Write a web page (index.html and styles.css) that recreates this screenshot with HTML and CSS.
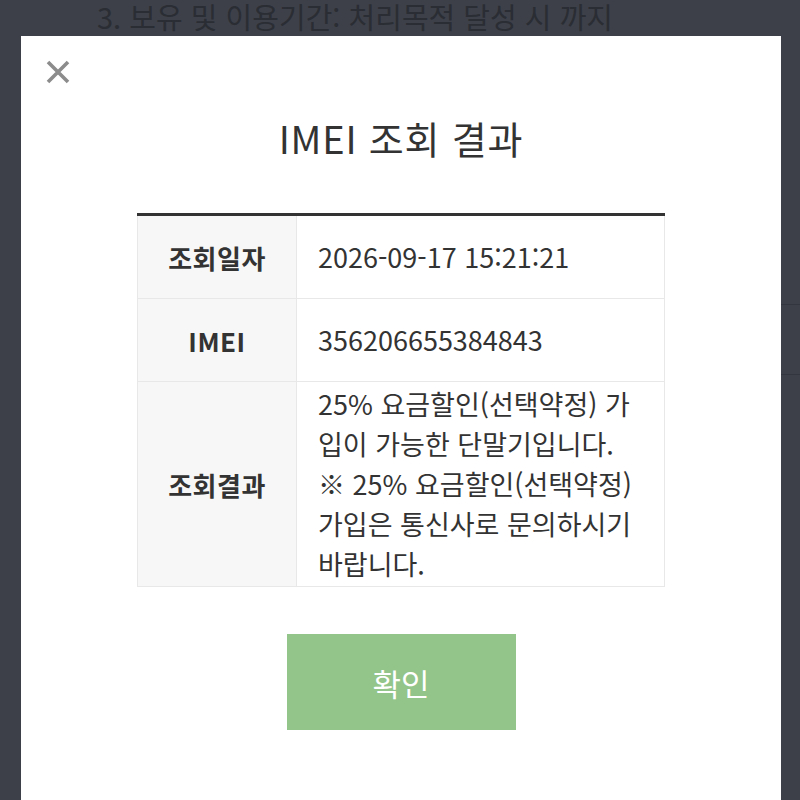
FILE: index.html
```html
<!DOCTYPE html>
<html lang="ko">
<head>
<meta charset="UTF-8">
<meta name="viewport" content="width=device-width, initial-scale=1.0">
<title>IMEI 조회 결과</title>
<link rel="stylesheet" href="styles.css">
</head>
<body>
<div class="page">
<p class="page-text">3. 보유 및 이용기간: 처리목적 달성 시 까지</p>
<div class="page-list">
<div class="page-row"></div>
<div class="page-row"></div>
</div>
</div>

<div class="modal">
<button class="close-btn" type="button" aria-label="닫기">
<svg width="24" height="24" viewBox="0 0 24 24">
<path d="M2 2 L22 22 M22 2 L2 22" stroke="#8c8c8c" stroke-width="3.6" fill="none"/>
</svg>
</button>
<h2 class="modal-title">IMEI 조회 결과</h2>

<div class="result-table">
<div class="result-row">
<div class="result-label">조회일자</div>
<div class="result-value">2026-09-17 15:21:21</div>
</div>
<div class="result-row">
<div class="result-label">IMEI</div>
<div class="result-value">356206655384843</div>
</div>
<div class="result-row tall">
<div class="result-label">조회결과</div>
<div class="result-value">25% 요금할인(선택약정) 가입이 가능한 단말기입니다.<br>※ 25% 요금할인(선택약정) 가입은 통신사로 문의하시기 바랍니다.</div>
</div>
</div>

<div class="btn-wrap">
<button class="confirm-btn" type="button">확인</button>
</div>
</div>
</body>
</html>
```

FILE: styles.css
```css
html, body {
margin: 0;
padding: 0;
height: 100%;
overflow: hidden;
}

body {
background-color: #3d4049;
font-family: "Noto Sans CJK KR", "Noto Sans", sans-serif;
color: #333;
}

/* page under the dimmed layer */
.page-text {
margin: 0;
padding-left: 97px;
font-size: 29px;
line-height: 32px;
height: 32px;
color: #2a2d33;
}

.page-list {
margin: 272px 0 0 40px;
}

.page-row {
height: 69px;
border-top: 1px solid #33363e;
}

/* modal */
.modal {
position: fixed;
left: 21px;
top: 36px;
width: 760px;
bottom: -20px;
background-color: #fff;
padding-top: 24px;
box-sizing: border-box;
}

.close-btn {
display: block;
margin-left: 25px;
width: 24px;
height: 24px;
padding: 0;
border: none;
background: none;
cursor: pointer;
}

.close-btn svg {
display: block;
}

.modal-title {
margin: 27px 0 0;
text-align: center;
font-size: 38px;
letter-spacing: 0.8px;
line-height: 54px;
height: 54px;
font-weight: normal;
color: #333;
}

.result-table {
width: 528px;
margin: 48px auto 0;
border-top: 3px solid #333;
}

.result-row {
display: flex;
border: 1px solid #e8e8e8;
border-top: none;
min-height: 82px;
}

.result-label {
width: 158px;
flex-shrink: 0;
background-color: #f7f7f7;
border-right: 1px solid #e8e8e8;
display: flex;
align-items: center;
justify-content: center;
font-size: 26px;
letter-spacing: 0.5px;
font-weight: bold;
color: #333;
}

.result-value {
flex: 1;
display: flex;
align-items: center;
padding: 2px 20px 2px 21px;
font-size: 27px;
line-height: 40px;
color: #333;
}

.tall .result-value {
display: block;
}

.btn-wrap {
text-align: center;
margin-top: 47px;
}

.confirm-btn {
width: 229px;
height: 96px;
border: none;
background-color: #93c58a;
color: #fff;
font-family: "Noto Sans CJK KR", "Noto Sans", sans-serif;
font-size: 31px;
cursor: pointer;
}
```
